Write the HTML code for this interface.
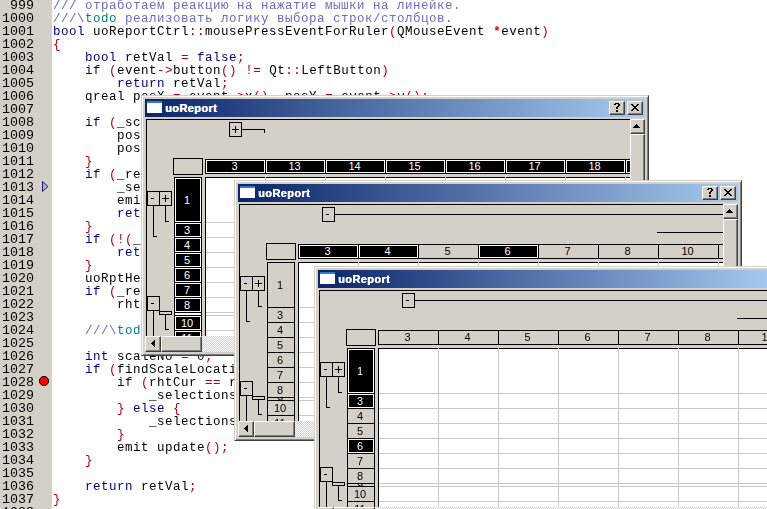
<!DOCTYPE html><html><head><meta charset="utf-8"><style>
*{margin:0;padding:0;box-sizing:border-box}
html,body{width:767px;height:509px;overflow:hidden;background:#fff;position:relative}
.ab{position:absolute}
#gut{left:0;top:0;width:52px;height:509px;background:#d4d0c8}
.ln{position:absolute;left:2px;width:32px;text-align:right;font-family:"Liberation Mono",monospace;font-size:13.33px;line-height:13px;color:#000;white-space:pre}
.cl{position:absolute;left:53px;font-family:"Liberation Mono",monospace;font-size:12.5px;letter-spacing:0.5px;line-height:13px;color:#000;white-space:pre}
.cl,.ln{will-change:transform}
.kw{color:#000080}
.op{color:#b00020}
.cm{color:#6c6cc0}
.td{color:#008080}
.win{position:absolute;background:#d4d0c8;overflow:hidden}
.tb{position:absolute;left:4px;top:4px;width:500px;height:18px;background:linear-gradient(to right,#0a246a,#a6caf0)}
.tt{position:absolute;left:20px;top:2px;font-family:"Liberation Sans",sans-serif;font-weight:bold;font-size:11px;letter-spacing:0.4px;text-shadow:0.4px 0 0 #fff;line-height:14px;color:#fff;white-space:pre}
.ic{position:absolute;left:2px;top:2px;width:15px;height:12px;background:#fff;border-top:2px solid #2a7ad8}
.btn{position:absolute;width:16px;height:14px;background:#d4d0c8;border-top:1px solid #fff;border-left:1px solid #fff;border-right:1px solid #404040;border-bottom:1px solid #404040;box-shadow:inset -1px -1px 0 #808080}
.bx{position:absolute;border:1px solid #000;background:#d4d0c8}
.ch{position:absolute;overflow:hidden;height:15px;border:1px solid #000;background:#d4d0c8;padding-right:2px;font-family:"Liberation Sans",sans-serif;font-size:11px;line-height:13px;text-align:center;color:#000}
.sel{background:#000;color:#fff;box-shadow:inset 0 0 0 1px #fff}
.hl{position:absolute;height:1px;background:#000}
.vl{position:absolute;width:1px;background:#000}
.gl{position:absolute;background:#c8c8c8}
.sb{position:absolute;background:#d4d0c8;border-top:1px solid #fff;border-left:1px solid #fff;border-right:1px solid #404040;border-bottom:1px solid #404040;box-shadow:inset -1px -1px 0 #808080}
.trk{position:absolute;background:conic-gradient(#fff 25%,#d4d0c8 0 50%,#fff 0 75%,#d4d0c8 0) 0 0/2px 2px}
</style></head><body>
<div class="ab" id="gut"></div>
<div class="ln" style="top:-1px">999</div>
<div class="cl" style="top:0px"><span class="cm">/// отработаем реакцию на нажатие мышки на линейке.</span></div>
<div class="ln" style="top:12px">1000</div>
<div class="cl" style="top:13px"><span class="cm">///\</span><span class="td">todo</span><span class="cm"> реализовать логику выбора строк/столбцов.</span></div>
<div class="ln" style="top:25px">1001</div>
<div class="cl" style="top:26px"><span class="kw">bool</span> uoReportCtrl<span class="op">::</span>mousePressEventForRuler<span class="op">(</span>QMouseEvent <span class="op" style="font-weight:bold;color:#e00000">*</span>event<span class="op">)</span></div>
<div class="ln" style="top:38px">1002</div>
<div class="cl" style="top:39px"><span class="op">{</span></div>
<div class="ln" style="top:51px">1003</div>
<div class="cl" style="top:52px">    <span class="kw">bool</span> retVal <span class="op">=</span> <span class="kw">false</span><span class="op">;</span></div>
<div class="ln" style="top:64px">1004</div>
<div class="cl" style="top:65px">    <span class="kw">if</span> <span class="op">(</span>event<span class="op">-&gt;</span>button<span class="op">()</span> <span class="op">!=</span> Qt<span class="op">::</span>LeftButton<span class="op">)</span></div>
<div class="ln" style="top:77px">1005</div>
<div class="cl" style="top:78px">        <span class="kw">return</span> retVal<span class="op">;</span></div>
<div class="ln" style="top:90px">1006</div>
<div class="cl" style="top:91px">    qreal posX <span class="op">=</span> event<span class="op">-&gt;</span>x<span class="op">(),</span> posY <span class="op">=</span> event<span class="op">-&gt;</span>y<span class="op">();</span></div>
<div class="ln" style="top:103px">1007</div>
<div class="cl" style="top:104px"></div>
<div class="ln" style="top:116px">1008</div>
<div class="cl" style="top:117px">    <span class="kw">if</span> <span class="op">(</span>_scaleStartPositionX <span class="op">&gt;</span> posX<span class="op">){</span></div>
<div class="ln" style="top:129px">1009</div>
<div class="cl" style="top:130px">        posX <span class="op">=</span> posX<span class="op">;</span></div>
<div class="ln" style="top:142px">1010</div>
<div class="cl" style="top:143px">        posY <span class="op">=</span> posY<span class="op">;</span></div>
<div class="ln" style="top:155px">1011</div>
<div class="cl" style="top:156px">    <span class="op">}</span></div>
<div class="ln" style="top:168px">1012</div>
<div class="cl" style="top:169px">    <span class="kw">if</span> <span class="op">(</span>_resizeLine<span class="op">){</span></div>
<div class="ln" style="top:181px">1013</div>
<div class="cl" style="top:182px">        _selections<span class="op">-&gt;</span>clear<span class="op">();</span></div>
<div class="ln" style="top:194px">1014</div>
<div class="cl" style="top:195px">        emit update<span class="op">();</span></div>
<div class="ln" style="top:207px">1015</div>
<div class="cl" style="top:208px">        <span class="kw">return</span> retVal<span class="op">;</span></div>
<div class="ln" style="top:220px">1016</div>
<div class="cl" style="top:221px">    <span class="op">}</span></div>
<div class="ln" style="top:233px">1017</div>
<div class="cl" style="top:234px">    <span class="kw">if</span> <span class="op">(!(</span>_showVHeader <span class="op">||</span> _showHHeader<span class="op">))</span></div>
<div class="ln" style="top:246px">1018</div>
<div class="cl" style="top:247px">        <span class="kw">return</span> retVal<span class="op">;</span></div>
<div class="ln" style="top:259px">1019</div>
<div class="cl" style="top:260px">    <span class="op">}</span></div>
<div class="ln" style="top:272px">1020</div>
<div class="cl" style="top:273px">    uoRptHeaderType rhtCur <span class="op">=</span> rhtUnknown<span class="op">;</span></div>
<div class="ln" style="top:285px">1021</div>
<div class="cl" style="top:286px">    <span class="kw">if</span> <span class="op">(</span>_resizeLine<span class="op">){</span></div>
<div class="ln" style="top:298px">1022</div>
<div class="cl" style="top:299px">        rhtCur <span class="op">=</span> rhtVertical<span class="op">;</span></div>
<div class="ln" style="top:311px">1023</div>
<div class="cl" style="top:312px"></div>
<div class="ln" style="top:324px">1024</div>
<div class="cl" style="top:325px"><span class="cm">    ///\</span><span class="td">todo</span><span class="cm"></span></div>
<div class="ln" style="top:337px">1025</div>
<div class="cl" style="top:338px"></div>
<div class="ln" style="top:350px">1026</div>
<div class="cl" style="top:351px">    <span class="kw">int</span> scaleNo <span class="op">=</span> 0<span class="op">;</span></div>
<div class="ln" style="top:363px">1027</div>
<div class="cl" style="top:364px">    <span class="kw">if</span> <span class="op">(</span>findScaleLocation<span class="op">(</span>posX<span class="op">,</span> posY<span class="op">,</span> scaleNo<span class="op">,</span> rhtCur<span class="op">)){</span></div>
<div class="ln" style="top:376px">1028</div>
<div class="cl" style="top:377px">        <span class="kw">if</span> <span class="op">(</span>rhtCur <span class="op">==</span> rhtVertical<span class="op">){</span></div>
<div class="ln" style="top:389px">1029</div>
<div class="cl" style="top:390px">            _selections<span class="op">-&gt;</span>selectRow<span class="op">(</span>scaleNo<span class="op">);</span></div>
<div class="ln" style="top:402px">1030</div>
<div class="cl" style="top:403px">        <span class="op">}</span> <span class="kw">else</span> <span class="op">{</span></div>
<div class="ln" style="top:415px">1031</div>
<div class="cl" style="top:416px">            _selections<span class="op">-&gt;</span>selectCol<span class="op">(</span>scaleNo<span class="op">);</span></div>
<div class="ln" style="top:428px">1032</div>
<div class="cl" style="top:429px">        <span class="op">}</span></div>
<div class="ln" style="top:441px">1033</div>
<div class="cl" style="top:442px">        emit update<span class="op">();</span></div>
<div class="ln" style="top:454px">1034</div>
<div class="cl" style="top:455px">    <span class="op">}</span></div>
<div class="ln" style="top:467px">1035</div>
<div class="cl" style="top:468px"></div>
<div class="ln" style="top:480px">1036</div>
<div class="cl" style="top:481px">    <span class="kw">return</span> retVal<span class="op">;</span></div>
<div class="ln" style="top:493px">1037</div>
<div class="cl" style="top:494px"><span class="op">}</span></div>
<div class="ln" style="top:506px">1038</div>
<div class="cl" style="top:507px"></div>
<svg class="ab" style="left:0;top:0" width="52" height="509"><polygon points="42.5,181.5 48,186.5 42.5,191.5" fill="#a8a8f0" stroke="#202060" stroke-width="1"/><circle cx="44" cy="381" r="4.6" fill="#ff0000" stroke="#000" stroke-width="1"/></svg>
<div class="win" style="left:141px;top:95px;width:508px;height:261px;border-top:1px solid #d4d0c8;border-left:1px solid #d4d0c8;border-right:1px solid #404040;border-bottom:1px solid #404040;box-shadow:inset 1px 1px 0 #fff, inset -1px -1px 0 #808080">
<div class="tb" style="left:3px;top:3px;background:linear-gradient(to right,#0a246a,#a6caf0 100%)"><div class="ic"></div><div class="tt">uoReport</div><div class="btn" style="left:464px;top:2px"><svg width="14" height="12" style="position:absolute;left:0;top:0" shape-rendering="crispEdges"><path d="M5 1h4v1h-4z M4 2h2v1h-2z M8 2h2v1h-2z M8 3h2v1h-2z M7 4h2v1h-2z M6 5h2v1h-2z M6 6h2v1h-2z M6 8h2v2h-2z" fill="#000"/></svg></div><div class="btn" style="left:482px;top:2px"><svg width="14" height="12" style="position:absolute;left:0;top:0" shape-rendering="crispEdges"><path d="M3 2h2v1h-2z M9 2h2v1h-2z M4 3h2v1h-2z M8 3h2v1h-2z M5 4h4v1h-4z M6 5h2v1h-2z M5 6h4v1h-4z M4 7h2v1h-2z M8 7h2v1h-2z M3 8h2v1h-2z M9 8h2v1h-2z" fill="#000"/></svg></div></div>
<div class="hl" style="left:4px;top:23px;width:484px;height:1px;">
</div>
<div class="vl" style="left:4px;top:23px;width:1px;height:217px;">
</div>
<div class="bx" style="left:87px;top:26px;width:13px;height:15px;">
<svg width="11" height="13" style="position:absolute;left:0;top:0"><path d="M2 6.5 H9 M5.5 3 V10" stroke="#000" stroke-width="1"/></svg></div>
<div class="hl" style="left:100px;top:33px;width:22px;height:1px;">
</div>
<div class="vl" style="left:122px;top:33px;width:1px;height:4px;">
</div>
<div class="bx" style="left:31px;top:62px;width:30px;height:17px;">
</div>
<div style="position:absolute;left:0;top:0;width:488px;height:240px;overflow:hidden">
<div class="ch sel" style="left:63px;top:63px;width:61px;height:15px;">
3</div>
<div class="ch sel" style="left:123px;top:63px;width:61px;height:15px;">
13</div>
<div class="ch sel" style="left:183px;top:63px;width:61px;height:15px;">
14</div>
<div class="ch sel" style="left:243px;top:63px;width:61px;height:15px;">
15</div>
<div class="ch sel" style="left:303px;top:63px;width:61px;height:15px;">
16</div>
<div class="ch sel" style="left:363px;top:63px;width:61px;height:15px;">
17</div>
<div class="ch sel" style="left:423px;top:63px;width:61px;height:15px;">
18</div>
<div class="ch sel" style="left:483px;top:63px;width:61px;height:15px;">
19</div>
<div class="ab" style="left:63px;top:81px;width:425px;height:160px;background:#fff">
</div>
<div class="hl" style="left:63px;top:81px;width:425px;height:1px;">
</div>
<div class="vl" style="left:63px;top:81px;width:1px;height:160px;">
</div>
<div class="gl" style="left:123px;top:81px;width:1px;height:159px;">
</div>
<div class="gl" style="left:183px;top:81px;width:1px;height:159px;">
</div>
<div class="gl" style="left:243px;top:81px;width:1px;height:159px;">
</div>
<div class="gl" style="left:303px;top:81px;width:1px;height:159px;">
</div>
<div class="gl" style="left:363px;top:81px;width:1px;height:159px;">
</div>
<div class="gl" style="left:423px;top:81px;width:1px;height:159px;">
</div>
<div class="gl" style="left:483px;top:81px;width:1px;height:159px;">
</div>
<div class="gl" style="left:64px;top:126px;width:424px;height:1px;">
</div>
<div class="gl" style="left:64px;top:141px;width:424px;height:1px;">
</div>
<div class="gl" style="left:64px;top:156px;width:424px;height:1px;">
</div>
<div class="gl" style="left:64px;top:171px;width:424px;height:1px;">
</div>
<div class="gl" style="left:64px;top:186px;width:424px;height:1px;">
</div>
<div class="gl" style="left:64px;top:201px;width:424px;height:1px;">
</div>
<div class="gl" style="left:64px;top:216px;width:424px;height:1px;">
</div>
<div class="gl" style="left:64px;top:219px;width:424px;height:1px;">
</div>
<div class="gl" style="left:64px;top:234px;width:424px;height:1px;">
</div>
<div class="gl" style="left:64px;top:249px;width:424px;height:1px;">
</div>
<div class="ch sel" style="left:32px;top:81px;width:28px;height:46px;line-height:44px">
1</div>
<div class="ch sel" style="left:32px;top:126px;width:28px;height:16px;line-height:14px">
3</div>
<div class="ch sel" style="left:32px;top:141px;width:28px;height:16px;line-height:14px">
4</div>
<div class="ch sel" style="left:32px;top:156px;width:28px;height:16px;line-height:14px">
5</div>
<div class="ch sel" style="left:32px;top:171px;width:28px;height:16px;line-height:14px">
6</div>
<div class="ch sel" style="left:32px;top:186px;width:28px;height:16px;line-height:14px">
7</div>
<div class="ch sel" style="left:32px;top:201px;width:28px;height:16px;line-height:14px">
8</div>
<div class="ch sel" style="left:32px;top:216px;width:28px;height:4px;line-height:2px">
9</div>
<div class="ch sel" style="left:32px;top:219px;width:28px;height:16px;line-height:14px">
10</div>
<div class="ch sel" style="left:32px;top:234px;width:28px;height:16px;line-height:14px">
11</div>
</div>
<div class="bx" style="left:5px;top:95px;width:13px;height:15px;">
<svg width="11" height="13" style="position:absolute;left:0;top:0"><path d="M3 6.5 H6" stroke="#000" stroke-width="1"/></svg></div>
<div class="bx" style="left:17px;top:95px;width:13px;height:15px;">
<svg width="11" height="13" style="position:absolute;left:0;top:0"><path d="M2 6.5 H9 M5.5 3 V10" stroke="#000" stroke-width="1"/></svg></div>
<div class="vl" style="left:11px;top:110px;width:1px;height:31px;">
</div>
<div class="hl" style="left:11px;top:140px;width:4px;height:1px;">
</div>
<div class="vl" style="left:23px;top:110px;width:1px;height:16px;">
</div>
<div class="hl" style="left:23px;top:125px;width:4px;height:1px;">
</div>
<div class="bx" style="left:5px;top:200px;width:13px;height:15px;">
<svg width="11" height="13" style="position:absolute;left:0;top:0"><path d="M3 6.5 H6" stroke="#000" stroke-width="1"/></svg></div>
<div class="vl" style="left:11px;top:215px;width:1px;height:25px;">
</div>
<div class="bx" style="left:17px;top:215px;width:13px;height:4px;">
</div>
<div class="vl" style="left:23px;top:219px;width:1px;height:15px;">
</div>
<div class="hl" style="left:23px;top:233px;width:4px;height:1px;">
</div>
<div class="sb" style="left:488px;top:23px;width:15px;height:15px;">
<svg width="13" height="13" style="position:absolute;left:0;top:0" shape-rendering="crispEdges"><rect x="5" y="4" width="1" height="1"/><rect x="4" y="5" width="3" height="1"/><rect x="3" y="6" width="5" height="1"/><rect x="2" y="7" width="7" height="1"/></svg></div>
<div class="sb" style="left:488px;top:38px;width:15px;height:202px;">
</div>
<div class="trk" style="left:3px;top:240px;width:485px;height:16px;">
</div>
<div class="sb" style="left:3px;top:240px;width:16px;height:16px;">
<svg width="14" height="14" style="position:absolute;left:0;top:0" shape-rendering="crispEdges"><rect x="5" y="6" width="1" height="1"/><rect x="6" y="5" width="1" height="3"/><rect x="7" y="4" width="1" height="5"/><rect x="8" y="3" width="1" height="7"/></svg></div>
<div class="sb" style="left:19px;top:240px;width:41px;height:16px;">
</div>
</div>
<div class="win" style="left:234px;top:180px;width:508px;height:261px;border-top:1px solid #d4d0c8;border-left:1px solid #d4d0c8;border-right:1px solid #404040;border-bottom:1px solid #404040;box-shadow:inset 1px 1px 0 #fff, inset -1px -1px 0 #808080">
<div class="tb" style="left:3px;top:3px;background:linear-gradient(to right,#0a246a,#a6caf0 100%)"><div class="ic"></div><div class="tt">uoReport</div><div class="btn" style="left:464px;top:2px"><svg width="14" height="12" style="position:absolute;left:0;top:0" shape-rendering="crispEdges"><path d="M5 1h4v1h-4z M4 2h2v1h-2z M8 2h2v1h-2z M8 3h2v1h-2z M7 4h2v1h-2z M6 5h2v1h-2z M6 6h2v1h-2z M6 8h2v2h-2z" fill="#000"/></svg></div><div class="btn" style="left:482px;top:2px"><svg width="14" height="12" style="position:absolute;left:0;top:0" shape-rendering="crispEdges"><path d="M3 2h2v1h-2z M9 2h2v1h-2z M4 3h2v1h-2z M8 3h2v1h-2z M5 4h4v1h-4z M6 5h2v1h-2z M5 6h4v1h-4z M4 7h2v1h-2z M8 7h2v1h-2z M3 8h2v1h-2z M9 8h2v1h-2z" fill="#000"/></svg></div></div>
<div class="hl" style="left:4px;top:23px;width:484px;height:1px;">
</div>
<div class="vl" style="left:4px;top:23px;width:1px;height:217px;">
</div>
<div class="bx" style="left:87px;top:26px;width:13px;height:15px;">
<svg width="11" height="13" style="position:absolute;left:0;top:0"><path d="M3 6.5 H6" stroke="#000" stroke-width="1"/></svg></div>
<div class="hl" style="left:100px;top:33px;width:388px;height:1px;">
</div>
<div class="hl" style="left:422px;top:51px;width:66px;height:1px;">
</div>
<div class="bx" style="left:31px;top:62px;width:30px;height:17px;">
</div>
<div style="position:absolute;left:0;top:0;width:488px;height:240px;overflow:hidden">
<div class="ch sel" style="left:63px;top:63px;width:61px;height:15px;">
3</div>
<div class="ch sel" style="left:123px;top:63px;width:61px;height:15px;">
4</div>
<div class="ch" style="left:183px;top:63px;width:61px;height:15px;">
5</div>
<div class="ch sel" style="left:243px;top:63px;width:61px;height:15px;">
6</div>
<div class="ch" style="left:303px;top:63px;width:61px;height:15px;">
7</div>
<div class="ch" style="left:363px;top:63px;width:61px;height:15px;">
8</div>
<div class="ch" style="left:423px;top:63px;width:61px;height:15px;">
10</div>
<div class="ch" style="left:483px;top:63px;width:61px;height:15px;">
11</div>
<div class="ab" style="left:63px;top:81px;width:425px;height:160px;background:#fff">
</div>
<div class="hl" style="left:63px;top:81px;width:425px;height:1px;">
</div>
<div class="vl" style="left:63px;top:81px;width:1px;height:160px;">
</div>
<div class="gl" style="left:123px;top:81px;width:1px;height:159px;">
</div>
<div class="gl" style="left:183px;top:81px;width:1px;height:159px;">
</div>
<div class="gl" style="left:243px;top:81px;width:1px;height:159px;">
</div>
<div class="gl" style="left:303px;top:81px;width:1px;height:159px;">
</div>
<div class="gl" style="left:363px;top:81px;width:1px;height:159px;">
</div>
<div class="gl" style="left:423px;top:81px;width:1px;height:159px;">
</div>
<div class="gl" style="left:483px;top:81px;width:1px;height:159px;">
</div>
<div class="gl" style="left:64px;top:126px;width:424px;height:1px;">
</div>
<div class="gl" style="left:64px;top:141px;width:424px;height:1px;">
</div>
<div class="gl" style="left:64px;top:156px;width:424px;height:1px;">
</div>
<div class="gl" style="left:64px;top:171px;width:424px;height:1px;">
</div>
<div class="gl" style="left:64px;top:186px;width:424px;height:1px;">
</div>
<div class="gl" style="left:64px;top:201px;width:424px;height:1px;">
</div>
<div class="gl" style="left:64px;top:216px;width:424px;height:1px;">
</div>
<div class="gl" style="left:64px;top:219px;width:424px;height:1px;">
</div>
<div class="gl" style="left:64px;top:234px;width:424px;height:1px;">
</div>
<div class="gl" style="left:64px;top:249px;width:424px;height:1px;">
</div>
<div class="ch" style="left:32px;top:81px;width:28px;height:46px;line-height:44px">
1</div>
<div class="ch" style="left:32px;top:126px;width:28px;height:16px;line-height:14px">
3</div>
<div class="ch" style="left:32px;top:141px;width:28px;height:16px;line-height:14px">
4</div>
<div class="ch" style="left:32px;top:156px;width:28px;height:16px;line-height:14px">
5</div>
<div class="ch" style="left:32px;top:171px;width:28px;height:16px;line-height:14px">
6</div>
<div class="ch" style="left:32px;top:186px;width:28px;height:16px;line-height:14px">
7</div>
<div class="ch" style="left:32px;top:201px;width:28px;height:16px;line-height:14px">
8</div>
<div class="ch" style="left:32px;top:216px;width:28px;height:4px;line-height:2px">
9</div>
<div class="ch" style="left:32px;top:219px;width:28px;height:16px;line-height:14px">
10</div>
<div class="ch" style="left:32px;top:234px;width:28px;height:16px;line-height:14px">
11</div>
</div>
<div class="bx" style="left:5px;top:95px;width:13px;height:15px;">
<svg width="11" height="13" style="position:absolute;left:0;top:0"><path d="M3 6.5 H6" stroke="#000" stroke-width="1"/></svg></div>
<div class="bx" style="left:17px;top:95px;width:13px;height:15px;">
<svg width="11" height="13" style="position:absolute;left:0;top:0"><path d="M2 6.5 H9 M5.5 3 V10" stroke="#000" stroke-width="1"/></svg></div>
<div class="vl" style="left:11px;top:110px;width:1px;height:31px;">
</div>
<div class="hl" style="left:11px;top:140px;width:4px;height:1px;">
</div>
<div class="vl" style="left:23px;top:110px;width:1px;height:16px;">
</div>
<div class="hl" style="left:23px;top:125px;width:4px;height:1px;">
</div>
<div class="bx" style="left:5px;top:200px;width:13px;height:15px;">
<svg width="11" height="13" style="position:absolute;left:0;top:0"><path d="M3 6.5 H6" stroke="#000" stroke-width="1"/></svg></div>
<div class="vl" style="left:11px;top:215px;width:1px;height:25px;">
</div>
<div class="bx" style="left:17px;top:215px;width:13px;height:4px;">
</div>
<div class="vl" style="left:23px;top:219px;width:1px;height:15px;">
</div>
<div class="hl" style="left:23px;top:233px;width:4px;height:1px;">
</div>
<div class="sb" style="left:488px;top:23px;width:15px;height:15px;">
<svg width="13" height="13" style="position:absolute;left:0;top:0" shape-rendering="crispEdges"><rect x="5" y="4" width="1" height="1"/><rect x="4" y="5" width="3" height="1"/><rect x="3" y="6" width="5" height="1"/><rect x="2" y="7" width="7" height="1"/></svg></div>
<div class="sb" style="left:488px;top:38px;width:15px;height:202px;">
</div>
<div class="trk" style="left:3px;top:240px;width:485px;height:16px;">
</div>
<div class="sb" style="left:3px;top:240px;width:16px;height:16px;">
<svg width="14" height="14" style="position:absolute;left:0;top:0" shape-rendering="crispEdges"><rect x="5" y="6" width="1" height="1"/><rect x="6" y="5" width="1" height="3"/><rect x="7" y="4" width="1" height="5"/><rect x="8" y="3" width="1" height="7"/></svg></div>
<div class="sb" style="left:19px;top:240px;width:41px;height:16px;">
</div>
</div>
<div class="win" style="left:314px;top:266px;width:508px;height:261px;border-top:1px solid #d4d0c8;border-left:1px solid #d4d0c8;border-right:1px solid #404040;border-bottom:1px solid #404040;box-shadow:inset 1px 1px 0 #fff, inset -1px -1px 0 #808080">
<div class="tb" style="left:3px;top:3px;background:linear-gradient(to right,#0a246a,#a6caf0 91%)"><div class="ic"></div><div class="tt">uoReport</div><div class="btn" style="left:464px;top:2px"><svg width="14" height="12" style="position:absolute;left:0;top:0" shape-rendering="crispEdges"><path d="M5 1h4v1h-4z M4 2h2v1h-2z M8 2h2v1h-2z M8 3h2v1h-2z M7 4h2v1h-2z M6 5h2v1h-2z M6 6h2v1h-2z M6 8h2v2h-2z" fill="#000"/></svg></div><div class="btn" style="left:482px;top:2px"><svg width="14" height="12" style="position:absolute;left:0;top:0" shape-rendering="crispEdges"><path d="M3 2h2v1h-2z M9 2h2v1h-2z M4 3h2v1h-2z M8 3h2v1h-2z M5 4h4v1h-4z M6 5h2v1h-2z M5 6h4v1h-4z M4 7h2v1h-2z M8 7h2v1h-2z M3 8h2v1h-2z M9 8h2v1h-2z" fill="#000"/></svg></div></div>
<div class="hl" style="left:4px;top:23px;width:484px;height:1px;">
</div>
<div class="vl" style="left:4px;top:23px;width:1px;height:217px;">
</div>
<div class="bx" style="left:87px;top:26px;width:13px;height:15px;">
<svg width="11" height="13" style="position:absolute;left:0;top:0"><path d="M3 6.5 H6" stroke="#000" stroke-width="1"/></svg></div>
<div class="hl" style="left:100px;top:33px;width:388px;height:1px;">
</div>
<div class="hl" style="left:422px;top:51px;width:66px;height:1px;">
</div>
<div class="bx" style="left:31px;top:62px;width:30px;height:17px;">
</div>
<div style="position:absolute;left:0;top:0;width:488px;height:240px;overflow:hidden">
<div class="ch" style="left:63px;top:63px;width:61px;height:15px;">
3</div>
<div class="ch" style="left:123px;top:63px;width:61px;height:15px;">
4</div>
<div class="ch" style="left:183px;top:63px;width:61px;height:15px;">
5</div>
<div class="ch" style="left:243px;top:63px;width:61px;height:15px;">
6</div>
<div class="ch" style="left:303px;top:63px;width:61px;height:15px;">
7</div>
<div class="ch" style="left:363px;top:63px;width:61px;height:15px;">
8</div>
<div class="ch" style="left:423px;top:63px;width:61px;height:15px;">
10</div>
<div class="ch" style="left:483px;top:63px;width:61px;height:15px;">
11</div>
<div class="ab" style="left:63px;top:81px;width:425px;height:160px;background:#fff">
</div>
<div class="hl" style="left:63px;top:81px;width:425px;height:1px;">
</div>
<div class="vl" style="left:63px;top:81px;width:1px;height:160px;">
</div>
<div class="gl" style="left:123px;top:81px;width:1px;height:159px;">
</div>
<div class="gl" style="left:183px;top:81px;width:1px;height:159px;">
</div>
<div class="gl" style="left:243px;top:81px;width:1px;height:159px;">
</div>
<div class="gl" style="left:303px;top:81px;width:1px;height:159px;">
</div>
<div class="gl" style="left:363px;top:81px;width:1px;height:159px;">
</div>
<div class="gl" style="left:423px;top:81px;width:1px;height:159px;">
</div>
<div class="gl" style="left:483px;top:81px;width:1px;height:159px;">
</div>
<div class="gl" style="left:64px;top:126px;width:424px;height:1px;">
</div>
<div class="gl" style="left:64px;top:141px;width:424px;height:1px;">
</div>
<div class="gl" style="left:64px;top:156px;width:424px;height:1px;">
</div>
<div class="gl" style="left:64px;top:171px;width:424px;height:1px;">
</div>
<div class="gl" style="left:64px;top:186px;width:424px;height:1px;">
</div>
<div class="gl" style="left:64px;top:201px;width:424px;height:1px;">
</div>
<div class="gl" style="left:64px;top:216px;width:424px;height:1px;">
</div>
<div class="gl" style="left:64px;top:219px;width:424px;height:1px;">
</div>
<div class="gl" style="left:64px;top:234px;width:424px;height:1px;">
</div>
<div class="gl" style="left:64px;top:249px;width:424px;height:1px;">
</div>
<div class="ch sel" style="left:32px;top:81px;width:28px;height:46px;line-height:44px">
1</div>
<div class="ch sel" style="left:32px;top:126px;width:28px;height:16px;line-height:14px">
3</div>
<div class="ch" style="left:32px;top:141px;width:28px;height:16px;line-height:14px">
4</div>
<div class="ch" style="left:32px;top:156px;width:28px;height:16px;line-height:14px">
5</div>
<div class="ch sel" style="left:32px;top:171px;width:28px;height:16px;line-height:14px">
6</div>
<div class="ch" style="left:32px;top:186px;width:28px;height:16px;line-height:14px">
7</div>
<div class="ch" style="left:32px;top:201px;width:28px;height:16px;line-height:14px">
8</div>
<div class="ch" style="left:32px;top:216px;width:28px;height:4px;line-height:2px">
9</div>
<div class="ch" style="left:32px;top:219px;width:28px;height:16px;line-height:14px">
10</div>
<div class="ch" style="left:32px;top:234px;width:28px;height:16px;line-height:14px">
11</div>
</div>
<div class="bx" style="left:5px;top:95px;width:13px;height:15px;">
<svg width="11" height="13" style="position:absolute;left:0;top:0"><path d="M3 6.5 H6" stroke="#000" stroke-width="1"/></svg></div>
<div class="bx" style="left:17px;top:95px;width:13px;height:15px;">
<svg width="11" height="13" style="position:absolute;left:0;top:0"><path d="M2 6.5 H9 M5.5 3 V10" stroke="#000" stroke-width="1"/></svg></div>
<div class="vl" style="left:11px;top:110px;width:1px;height:31px;">
</div>
<div class="hl" style="left:11px;top:140px;width:4px;height:1px;">
</div>
<div class="vl" style="left:23px;top:110px;width:1px;height:16px;">
</div>
<div class="hl" style="left:23px;top:125px;width:4px;height:1px;">
</div>
<div class="bx" style="left:5px;top:200px;width:13px;height:15px;">
<svg width="11" height="13" style="position:absolute;left:0;top:0"><path d="M3 6.5 H6" stroke="#000" stroke-width="1"/></svg></div>
<div class="vl" style="left:11px;top:215px;width:1px;height:25px;">
</div>
<div class="bx" style="left:17px;top:215px;width:13px;height:4px;">
</div>
<div class="vl" style="left:23px;top:219px;width:1px;height:15px;">
</div>
<div class="hl" style="left:23px;top:233px;width:4px;height:1px;">
</div>
<div class="sb" style="left:488px;top:23px;width:15px;height:15px;">
<svg width="13" height="13" style="position:absolute;left:0;top:0" shape-rendering="crispEdges"><rect x="5" y="4" width="1" height="1"/><rect x="4" y="5" width="3" height="1"/><rect x="3" y="6" width="5" height="1"/><rect x="2" y="7" width="7" height="1"/></svg></div>
<div class="sb" style="left:488px;top:38px;width:15px;height:202px;">
</div>
<div class="trk" style="left:3px;top:240px;width:485px;height:16px;">
</div>
<div class="sb" style="left:3px;top:240px;width:16px;height:16px;">
<svg width="14" height="14" style="position:absolute;left:0;top:0" shape-rendering="crispEdges"><rect x="5" y="6" width="1" height="1"/><rect x="6" y="5" width="1" height="3"/><rect x="7" y="4" width="1" height="5"/><rect x="8" y="3" width="1" height="7"/></svg></div>
<div class="sb" style="left:19px;top:240px;width:41px;height:16px;">
</div>
</div>
</body></html>
